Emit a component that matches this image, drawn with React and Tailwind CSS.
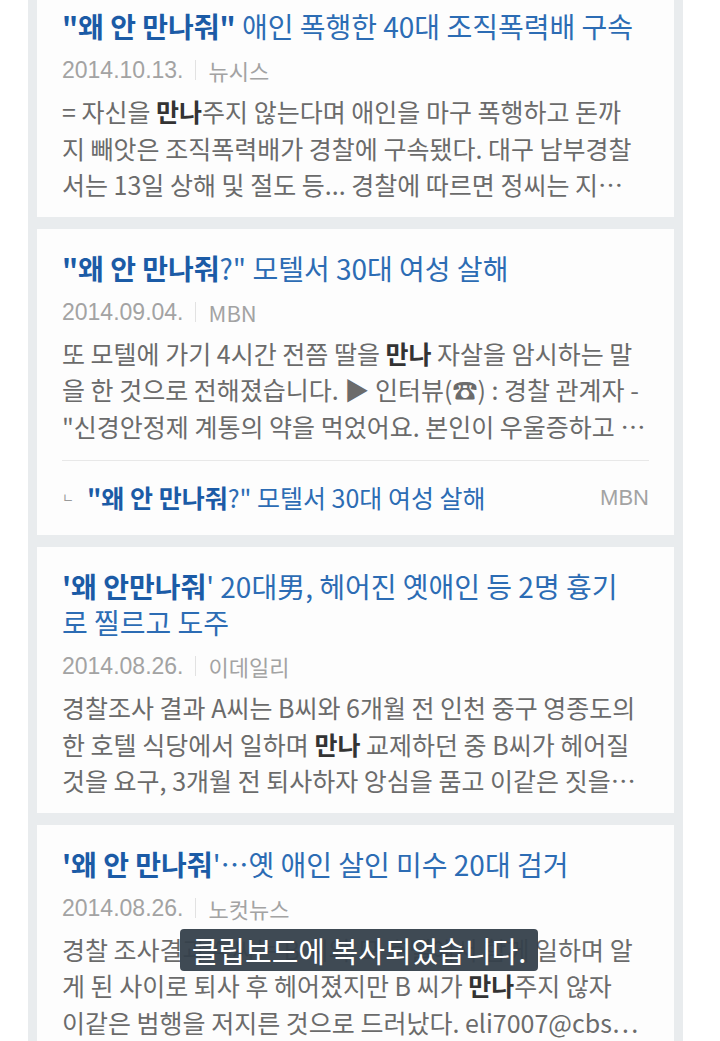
const news = [
  {
    id: 1,
    title: [{ b: '"왜 안 만나줘"' }, ' 애인 폭행한 40대 조직폭력배 구속'],
    date: '2014.10.13.',
    source: '뉴시스',
    lines: [
      ['= 자신을 ', { b: '만나' }, '주지 않는다며 애인을 마구 폭행하고 돈까'],
      ['지 빼앗은 조직폭력배가 경찰에 구속됐다. 대구 남부경찰'],
      ['서는 13일 상해 및 절도 등... 경찰에 따르면 정씨는 지…'],
    ],
  },
  {
    id: 2,
    title: [{ b: '"왜 안 만나줘' }, '?" 모텔서 30대 여성 살해'],
    date: '2014.09.04.',
    source: 'MBN',
    lines: [
      ['또 모텔에 가기 4시간 전쯤 딸을 ', { b: '만나' }, ' 자살을 암시하는 말'],
      ['을 한 것으로 전해졌습니다. ▶ 인터뷰(☎) : 경찰 관계자 -'],
      ['"신경안정제 계통의 약을 먹었어요. 본인이 우울증하고 …'],
    ],
    related: {
      title: [{ b: '"왜 안 만나줘' }, '?" 모텔서 30대 여성 살해'],
      source: 'MBN',
    },
  },
  {
    id: 3,
    title: [{ b: "'왜 안만나줘" }, "' 20대男, 헤어진 옛애인 등 2명 흉기", { br: true }, '로 찔르고 도주'],
    date: '2014.08.26.',
    source: '이데일리',
    lines: [
      ['경찰조사 결과 A씨는 B씨와 6개월 전 인천 중구 영종도의'],
      ['한 호텔 식당에서 일하며 ', { b: '만나' }, ' 교제하던 중 B씨가 헤어질'],
      ['것을 요구, 3개월 전 퇴사하자 앙심을 품고 이같은 짓을…'],
    ],
  },
  {
    id: 4,
    title: [{ b: "'왜 안 만나줘" }, "'…옛 애인 살인 미수 20대 검거"],
    date: '2014.08.26.',
    source: '노컷뉴스',
    lines: [
      ['경찰 조사결과 A 씨는 B 씨와 모 호텔에서 함께 일하며 알'],
      ['게 된 사이로 퇴사 후 헤어졌지만 B 씨가 ', { b: '만나' }, '주지 않자'],
      ['이같은 범행을 저지른 것으로 드러났다. eli7007@cbs…'],
    ],
  },
];

function Rich({ parts, boldClass }) {
  return parts.map((p, i) => {
    if (typeof p === 'string') return <span key={i}>{p}</span>;
    if (p.br) return <br key={i} />;
    return (
      <b key={i} className={boldClass}>
        {p.b}
      </b>
    );
  });
}

function NewsCard({ item }) {
  return (
    <div className="bg-[#fdfdfd] px-[25px] pt-[21px] pb-[14px]">
      <h2 className="whitespace-nowrap text-[28px] leading-[36px] text-[#2c6cb4]">
        <Rich parts={item.title} boldClass="font-bold text-[#1b5ba6]" />
      </h2>
      <div className="mt-[13px] flex items-center leading-[26px] text-[#a3a3a3]">
        <span className="text-[23px] font-['Liberation_Sans',sans-serif]">{item.date}</span>
        <span className="ml-[11px] mr-[13px] h-[20px] w-px bg-[#e2e2e2]" />
        <span className="text-[22px]">{item.source}</span>
      </div>
      <div className="mt-[10px] text-[25px] leading-[36.5px] text-[#6b6b6b]">
        {item.lines.map((line, i) => (
          <div key={i} className="whitespace-nowrap">
            <Rich parts={line} boldClass="font-bold text-[#333]" />
          </div>
        ))}
      </div>
      {item.related && (
        <div className="mt-[16px] border-t border-[#e8e8e8] pt-[18px] pb-[6px] flex items-center h-[36px] box-content">
          <span className="text-[13px] text-[#9a9a9a] mr-[13px]">ㄴ</span>
          <span className="flex-1 whitespace-nowrap text-[25px] leading-[36px] text-[#2c6cb4]">
            <Rich parts={item.related.title} boldClass="font-bold text-[#1b5ba6]" />
          </span>
          <span className="text-[22px] text-[#a3a3a3] font-['Liberation_Sans',sans-serif]">{item.related.source}</span>
        </div>
      )}
    </div>
  );
}

export default function App() {
  return (
    <div
      className="relative h-[1041px] overflow-hidden bg-white"
      style={{ fontFamily: '"Noto Sans CJK KR", "Noto Sans", sans-serif' }}
    >
      <div className="ml-[28px] w-[655px] bg-[#e9ecee] px-[9px] pb-[12px] -mt-[13px] flex flex-col gap-[12px]">
        {news.map((item) => (
          <NewsCard key={item.id} item={item} />
        ))}
      </div>

      {/* toast */}
      <div className="absolute left-[180px] top-[929px] w-[358px] h-[42px] rounded-[4px] bg-[#35404b]/95 flex items-center justify-center">
        <span className="text-white text-[29px] leading-none">클립보드에 복사되었습니다.</span>
      </div>
    </div>
  );
}
